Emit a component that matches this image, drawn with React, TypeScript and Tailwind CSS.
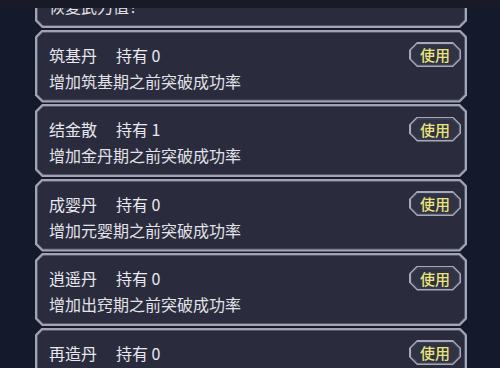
import React from 'react';

const items = [
  { name: '回春丹', count: 0, desc: '恢复武力值！' },
  { name: '筑基丹', count: 0, desc: '增加筑基期之前突破成功率' },
  { name: '结金散', count: 1, desc: '增加金丹期之前突破成功率' },
  { name: '成婴丹', count: 0, desc: '增加元婴期之前突破成功率' },
  { name: '逍遥丹', count: 0, desc: '增加出窍期之前突破成功率' },
  { name: '再造丹', count: 0, desc: '增加化神期之前突破成功率' },
];

function UseButton() {
  return (
    <div className="h-[25px] w-[52px] bg-[#a7a9b6] p-[1.5px] [clip-path:polygon(8px_0,calc(100%_-_8px)_0,100%_8px,100%_calc(100%_-_8px),calc(100%_-_8px)_100%,8px_100%,0_calc(100%_-_8px),0_8px)]">
      <div className="h-full w-full bg-[#3b3e51] p-[1.5px] [clip-path:polygon(7px_0,calc(100%_-_7px)_0,100%_7px,100%_calc(100%_-_7px),calc(100%_-_7px)_100%,7px_100%,0_calc(100%_-_7px),0_7px)]">
        <div className="flex h-full w-full items-center justify-center bg-[#303346] text-[15px] font-medium leading-none text-[#ebe57a] [clip-path:polygon(6px_0,calc(100%_-_6px)_0,100%_6px,100%_calc(100%_-_6px),calc(100%_-_6px)_100%,6px_100%,0_calc(100%_-_6px),0_6px)]">
          使用
        </div>
      </div>
    </div>
  );
}

function ItemCard({ name, count, desc }: { name: string; count: number; desc: string }) {
  return (
    <div className="h-[73px] bg-[#a2a4b1] p-[2px] [clip-path:polygon(7px_0,calc(100%_-_7px)_0,100%_7px,100%_calc(100%_-_7px),calc(100%_-_7px)_100%,7px_100%,0_calc(100%_-_7px),0_7px)]">
      <div className="h-full w-full bg-[#55586b] p-[1px] [clip-path:polygon(6px_0,calc(100%_-_6px)_0,100%_6px,100%_calc(100%_-_6px),calc(100%_-_6px)_100%,6px_100%,0_calc(100%_-_6px),0_6px)]">
        <div className="flex h-full w-full flex-col bg-[#2a2c3e] pl-[11px] pr-[3px] pt-[9px] [clip-path:polygon(5px_0,calc(100%_-_5px)_0,100%_5px,100%_calc(100%_-_5px),calc(100%_-_5px)_100%,5px_100%,0_calc(100%_-_5px),0_5px)]">
          <div className="flex h-[26px] items-center">
            <span className="text-[16px] leading-[26px] text-[#e8e8ee]">{name}</span>
            <span className="ml-[19px] text-[16px] leading-[26px] text-[#e8e8ee]">持有 {count}</span>
            <div className="ml-auto">
              <UseButton />
            </div>
          </div>
          <div className="text-[16px] leading-[26px] text-[#e2e2e8]">{desc}</div>
        </div>
      </div>
    </div>
  );
}

export default function App() {
  return (
    <div
      className="flex h-[368px] w-[500px] flex-col overflow-hidden bg-[#141a2b]"
      style={{ fontFamily: '"Noto Sans CJK SC", "Noto Sans", sans-serif' }}
    >
      <div className="h-[8px] shrink-0 bg-[#181b27]" />
      <div className="flex-1 overflow-hidden">
        <div className="-mt-[53px] flex flex-col gap-[1.5px] pl-[35px] pr-[33px]">
          {items.map((it) => (
            <ItemCard key={it.name} {...it} />
          ))}
        </div>
      </div>
    </div>
  );
}
